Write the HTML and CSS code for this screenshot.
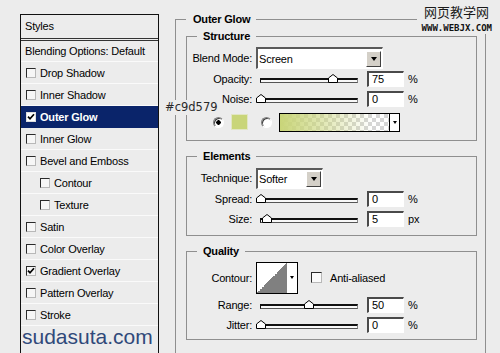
FILE: index.html
```html
<!DOCTYPE html>
<html lang="en">
<head>
    <meta charset="UTF-8">
    <title>Layer Style - Outer Glow</title>
    <link rel="stylesheet" href="styles.css">
</head>
<body>
    <div class="page">
        <div id="styles-panel">
            <div class="styles-head">Styles</div>
            <div class="style-row plain">Blending Options: Default</div>
            <div class="style-row"><span class="check"></span>Drop Shadow</div>
            <div class="style-row"><span class="check"></span>Inner Shadow</div>
            <div class="style-row selected"><span class="check on"><svg width="8" height="8" viewBox="0 0 8 8"><path d="M1 3.6 L3 5.8 L7 1.2" fill="none" stroke="#000" stroke-width="1.7"/></svg></span>Outer Glow</div>
            <div class="style-row"><span class="check"></span>Inner Glow</div>
            <div class="style-row"><span class="check"></span>Bevel and Emboss</div>
            <div class="style-row sub"><span class="check"></span>Contour</div>
            <div class="style-row sub"><span class="check"></span>Texture</div>
            <div class="style-row"><span class="check"></span>Satin</div>
            <div class="style-row"><span class="check"></span>Color Overlay</div>
            <div class="style-row"><span class="check on"><svg width="8" height="8" viewBox="0 0 8 8"><path d="M1 3.6 L3 5.8 L7 1.2" fill="none" stroke="#000" stroke-width="1.7"/></svg></span>Gradient Overlay</div>
            <div class="style-row"><span class="check"></span>Pattern Overlay</div>
            <div class="style-row"><span class="check"></span>Stroke</div>
            <div class="site-mark">sudasuta.com</div>
        </div>

        <fieldset class="group outer">
            <legend>Outer Glow</legend>

            <fieldset class="group structure">
                <legend>Structure</legend>
                <div class="row tall">
                    <span class="lbl">Blend Mode:</span>
                    <div class="select blend"><span>Screen</span><i class="drop"></i></div>
                </div>
                <div class="row">
                    <span class="lbl">Opacity:</span>
                    <div class="track"><svg class="thumb" style="left:75%" width="10" height="9" viewBox="0 0 10 9"><path d="M0.5 8.5V4L5 0.5L9.5 4V8.5Z" fill="#fff" stroke="#000"/></svg></div>
                    <span class="num">75</span><span class="unit">%</span>
                </div>
                <div class="row">
                    <span class="lbl">Noise:</span>
                    <div class="track"><svg class="thumb" style="left:0%" width="10" height="9" viewBox="0 0 10 9"><path d="M0.5 8.5V4L5 0.5L9.5 4V8.5Z" fill="#fff" stroke="#000"/></svg></div>
                    <span class="num">0</span><span class="unit">%</span>
                </div>
                <div class="row tall colors">
                    <span class="radio on"></span>
                    <span class="swatch"></span>
                    <span class="radio second"></span>
                    <div class="gradient"><span class="ramp"></span><i class="drop-mini"></i></div>
                </div>
            </fieldset>

            <fieldset class="group elements">
                <legend>Elements</legend>
                <div class="row tall">
                    <span class="lbl">Technique:</span>
                    <div class="select technique"><span>Softer</span><i class="drop"></i></div>
                </div>
                <div class="row">
                    <span class="lbl">Spread:</span>
                    <div class="track"><svg class="thumb" style="left:0%" width="10" height="9" viewBox="0 0 10 9"><path d="M0.5 8.5V4L5 0.5L9.5 4V8.5Z" fill="#fff" stroke="#000"/></svg></div>
                    <span class="num">0</span><span class="unit">%</span>
                </div>
                <div class="row">
                    <span class="lbl">Size:</span>
                    <div class="track"><svg class="thumb" style="left:6%" width="10" height="9" viewBox="0 0 10 9"><path d="M0.5 8.5V4L5 0.5L9.5 4V8.5Z" fill="#fff" stroke="#000"/></svg></div>
                    <span class="num">5</span><span class="unit">px</span>
                </div>
            </fieldset>

            <fieldset class="group quality">
                <legend>Quality</legend>
                <div class="row contour-row">
                    <span class="lbl">Contour:</span>
                    <div class="contour"><span class="curve"></span><i class="drop-mini"></i></div>
                    <span class="check big"></span>
                    <span class="check-label">Anti-aliased</span>
                </div>
                <div class="row">
                    <span class="lbl">Range:</span>
                    <div class="track"><svg class="thumb" style="left:50%" width="10" height="9" viewBox="0 0 10 9"><path d="M0.5 8.5V4L5 0.5L9.5 4V8.5Z" fill="#fff" stroke="#000"/></svg></div>
                    <span class="num">50</span><span class="unit">%</span>
                </div>
                <div class="row">
                    <span class="lbl">Jitter:</span>
                    <div class="track"><svg class="thumb" style="left:0%" width="10" height="9" viewBox="0 0 10 9"><path d="M0.5 8.5V4L5 0.5L9.5 4V8.5Z" fill="#fff" stroke="#000"/></svg></div>
                    <span class="num">0</span><span class="unit">%</span>
                </div>
            </fieldset>
        </fieldset>
    </div>

    <div class="hex-note">#c9d579</div>
    <div class="webjx">
        <div class="webjx-cn">网页教学网</div>
        <div class="webjx-en">WWW.WEBJX.COM</div>
    </div>
</body>
</html>
```

FILE: styles.css
```css
body {
    margin: 0;
    height: 353px;
    overflow: hidden;
    position: relative;
    background-color: #ececec;
    font-family: "Liberation Sans", Arial, sans-serif;
    font-size: 11px;
    letter-spacing: -0.2px;
    color: #000;
}
.page {
    display: flex;
    align-items: flex-start;
    gap: 16px;
    padding: 13px 0 0 20px;
}

/* left list of layer styles */
#styles-panel {
    width: 137px;
    height: 360px;
    margin-top: 1px;
    border: 1px solid #111;
    flex-shrink: 0;
}
.styles-head {
    height: 23px;
    line-height: 23px;
    padding-left: 4px;
    border-bottom: 3px double #333;
}
.style-row {
    display: flex;
    align-items: center;
    height: 21px;
    padding-left: 5px;
    border-bottom: 1px solid #fafafa;
}
.style-row.plain {
    height: 20px;
    padding-left: 4px;
}
.style-row.sub {
    padding-left: 19px;
}
.style-row.selected {
    background-color: #0a246a;
    color: #fff;
    font-weight: bold;
    border-bottom-color: #0a246a;
}
.check {
    width: 10px;
    height: 10px;
    box-sizing: border-box;
    margin-right: 4px;
    border: 1px solid;
    border-color: #2a2a2a #b8b8b8 #b8b8b8 #2a2a2a;
    background-color: #f6f6f6;
    display: flex;
    align-items: center;
    justify-content: center;
    flex-shrink: 0;
}
.selected .check {
    background-color: #fff;
    border-color: #ddd;
}
.site-mark {
    padding-left: 1px;
    margin-top: 1px;
    font-size: 21px;
    line-height: 20px;
    letter-spacing: 0;
    color: #30497a;
}

/* group boxes */
.group {
    margin: 0;
    padding: 0;
    min-width: 0;
    border: 1px solid #8f8f8f;
}
.group legend {
    margin-left: 10px;
    padding: 0 6px;
    font-weight: bold;
    line-height: 13px;
}
.outer {
    width: 291px;
    padding: 0 8px 20px 10px;
}
.outer > legend {
    margin-left: 0;
    padding: 0 6px 0 7px;
}
.structure {
    margin-top: 4px;
    padding-bottom: 7px;
}
.elements {
    margin-top: 9px;
    padding-bottom: 6px;
}
.quality {
    margin-top: 9px;
    padding-bottom: 4px;
}

.row {
    display: flex;
    align-items: center;
    height: 20px;
}
.row.tall {
    height: 22px;
    margin-top: 4px;
}
.row.tall.colors {
    margin-top: 2px;
    padding-left: 26px;
}
.lbl {
    width: 65px;
    margin-right: 4px;
    text-align: right;
    flex-shrink: 0;
}

/* dropdowns */
.select {
    display: flex;
    align-items: center;
    box-sizing: border-box;
    height: 21px;
    background-color: #fff;
    border-top: 2px solid #5a5a5a;
    border-left: 2px solid #5a5a5a;
    border-right: 1px solid #fff;
    border-bottom: 1px solid #fff;
}
.select span {
    padding-left: 1px;
}
.select.blend {
    width: 127px;
    height: 22px;
}
.select.technique {
    width: 67px;
}
.drop {
    margin-left: auto;
    margin-right: 1px;
    width: 15px;
    height: 16px;
    box-sizing: border-box;
    background-color: #d4d0c8;
    border: 1px solid;
    border-color: #fff #404040 #404040 #fff;
    display: flex;
    align-items: center;
    justify-content: center;
}
.drop::after {
    content: "";
    border-style: solid;
    border-width: 4px 3.5px 0 3.5px;
    border-color: #000 transparent transparent transparent;
}
.drop-mini {
    width: 9px;
    align-self: stretch;
    background-color: #fff;
    display: flex;
    align-items: center;
    justify-content: center;
}
.drop-mini::after {
    content: "";
    border-style: solid;
    border-width: 3px 2.5px 0 2.5px;
    border-color: #000 transparent transparent transparent;
}

/* sliders and number fields */
.track {
    position: relative;
    width: 98px;
    height: 5px;
    box-sizing: border-box;
    margin: 2px 0 0 4px;
    background-color: #f8f8f8;
    border-top: 2px solid #111;
    border-left: 1px solid #111;
    border-bottom: 1px solid #555;
    border-right: 1px solid #888;
}
.thumb {
    position: absolute;
    top: -6px;
    transform: translateX(-50%);
}
.num {
    width: 37px;
    height: 16px;
    box-sizing: border-box;
    margin-left: 9px;
    padding-left: 3px;
    line-height: 13px;
    background-color: #fff;
    border-top: 2px solid #4a4a4a;
    border-left: 2px solid #4a4a4a;
    border-right: 1px solid #fff;
    border-bottom: 1px solid #fff;
}
.unit {
    margin-left: 4px;
}

/* colour row */
.radio {
    width: 11px;
    height: 11px;
    box-sizing: border-box;
    border-radius: 50%;
    border: 1px solid;
    border-color: #808080 #fff #fff #808080;
    background-color: #fff;
    box-shadow: inset 1px 1px 0 #404040;
}
.radio.on {
    background: radial-gradient(circle, #000 2px, #fff 2.5px);
}
.radio.second {
    margin-left: 13px;
}
.swatch {
    width: 17px;
    height: 16px;
    box-sizing: border-box;
    margin-left: 7px;
    background-color: #c9d579;
    border: 1px solid #e2e6c4;
}
.gradient {
    display: flex;
    width: 121px;
    height: 19px;
    box-sizing: border-box;
    margin-left: 7px;
    border: 1px solid #000;
}
.ramp {
    flex-grow: 1;
    border-right: 1px solid #000;
    background:
        linear-gradient(to right, #c9d579, rgba(201, 213, 121, 0.55) 40%, rgba(201, 213, 121, 0) 85%),
        repeating-conic-gradient(#fff 0 25%, #d6d6d6 0 50%) 0 0 / 8px 8px;
}

/* contour row */
.row.contour-row {
    height: 33px;
    margin-top: 3px;
    margin-bottom: 1px;
}
.contour {
    display: flex;
    width: 42px;
    height: 32px;
    box-sizing: border-box;
    border: 1px solid #000;
    background-color: #fff;
}
.curve {
    width: 30px;
    background: linear-gradient(to top left, #808080 50%, #fff 50%);
}
.check.big {
    width: 11px;
    height: 11px;
    margin: 0 8px 0 13px;
    background-color: #fafafa;
}

/* overlays */
.hex-note {
    position: absolute;
    left: 164px;
    top: 100px;
    padding: 0 1px;
    font-family: "DejaVu Sans", sans-serif;
    font-size: 11.5px;
    line-height: 15px;
    letter-spacing: 0;
    color: #2a2a2a;
    background-color: #ececec;
}
.webjx {
    position: absolute;
    left: 417px;
    top: 3px;
    width: 75px;
    height: 31px;
    background-color: #ececec;
    text-align: right;
    letter-spacing: 0;
}
.webjx-cn {
    padding-right: 3px;
    font-family: "Noto Sans CJK SC", sans-serif;
    font-size: 13px;
    line-height: 18px;
    color: #1a1a1a;
}
.webjx-en {
    margin-top: 3px;
    font-family: "DejaVu Sans Mono", monospace;
    font-weight: bold;
    font-size: 9px;
    line-height: 9px;
    color: #111;
}
```
